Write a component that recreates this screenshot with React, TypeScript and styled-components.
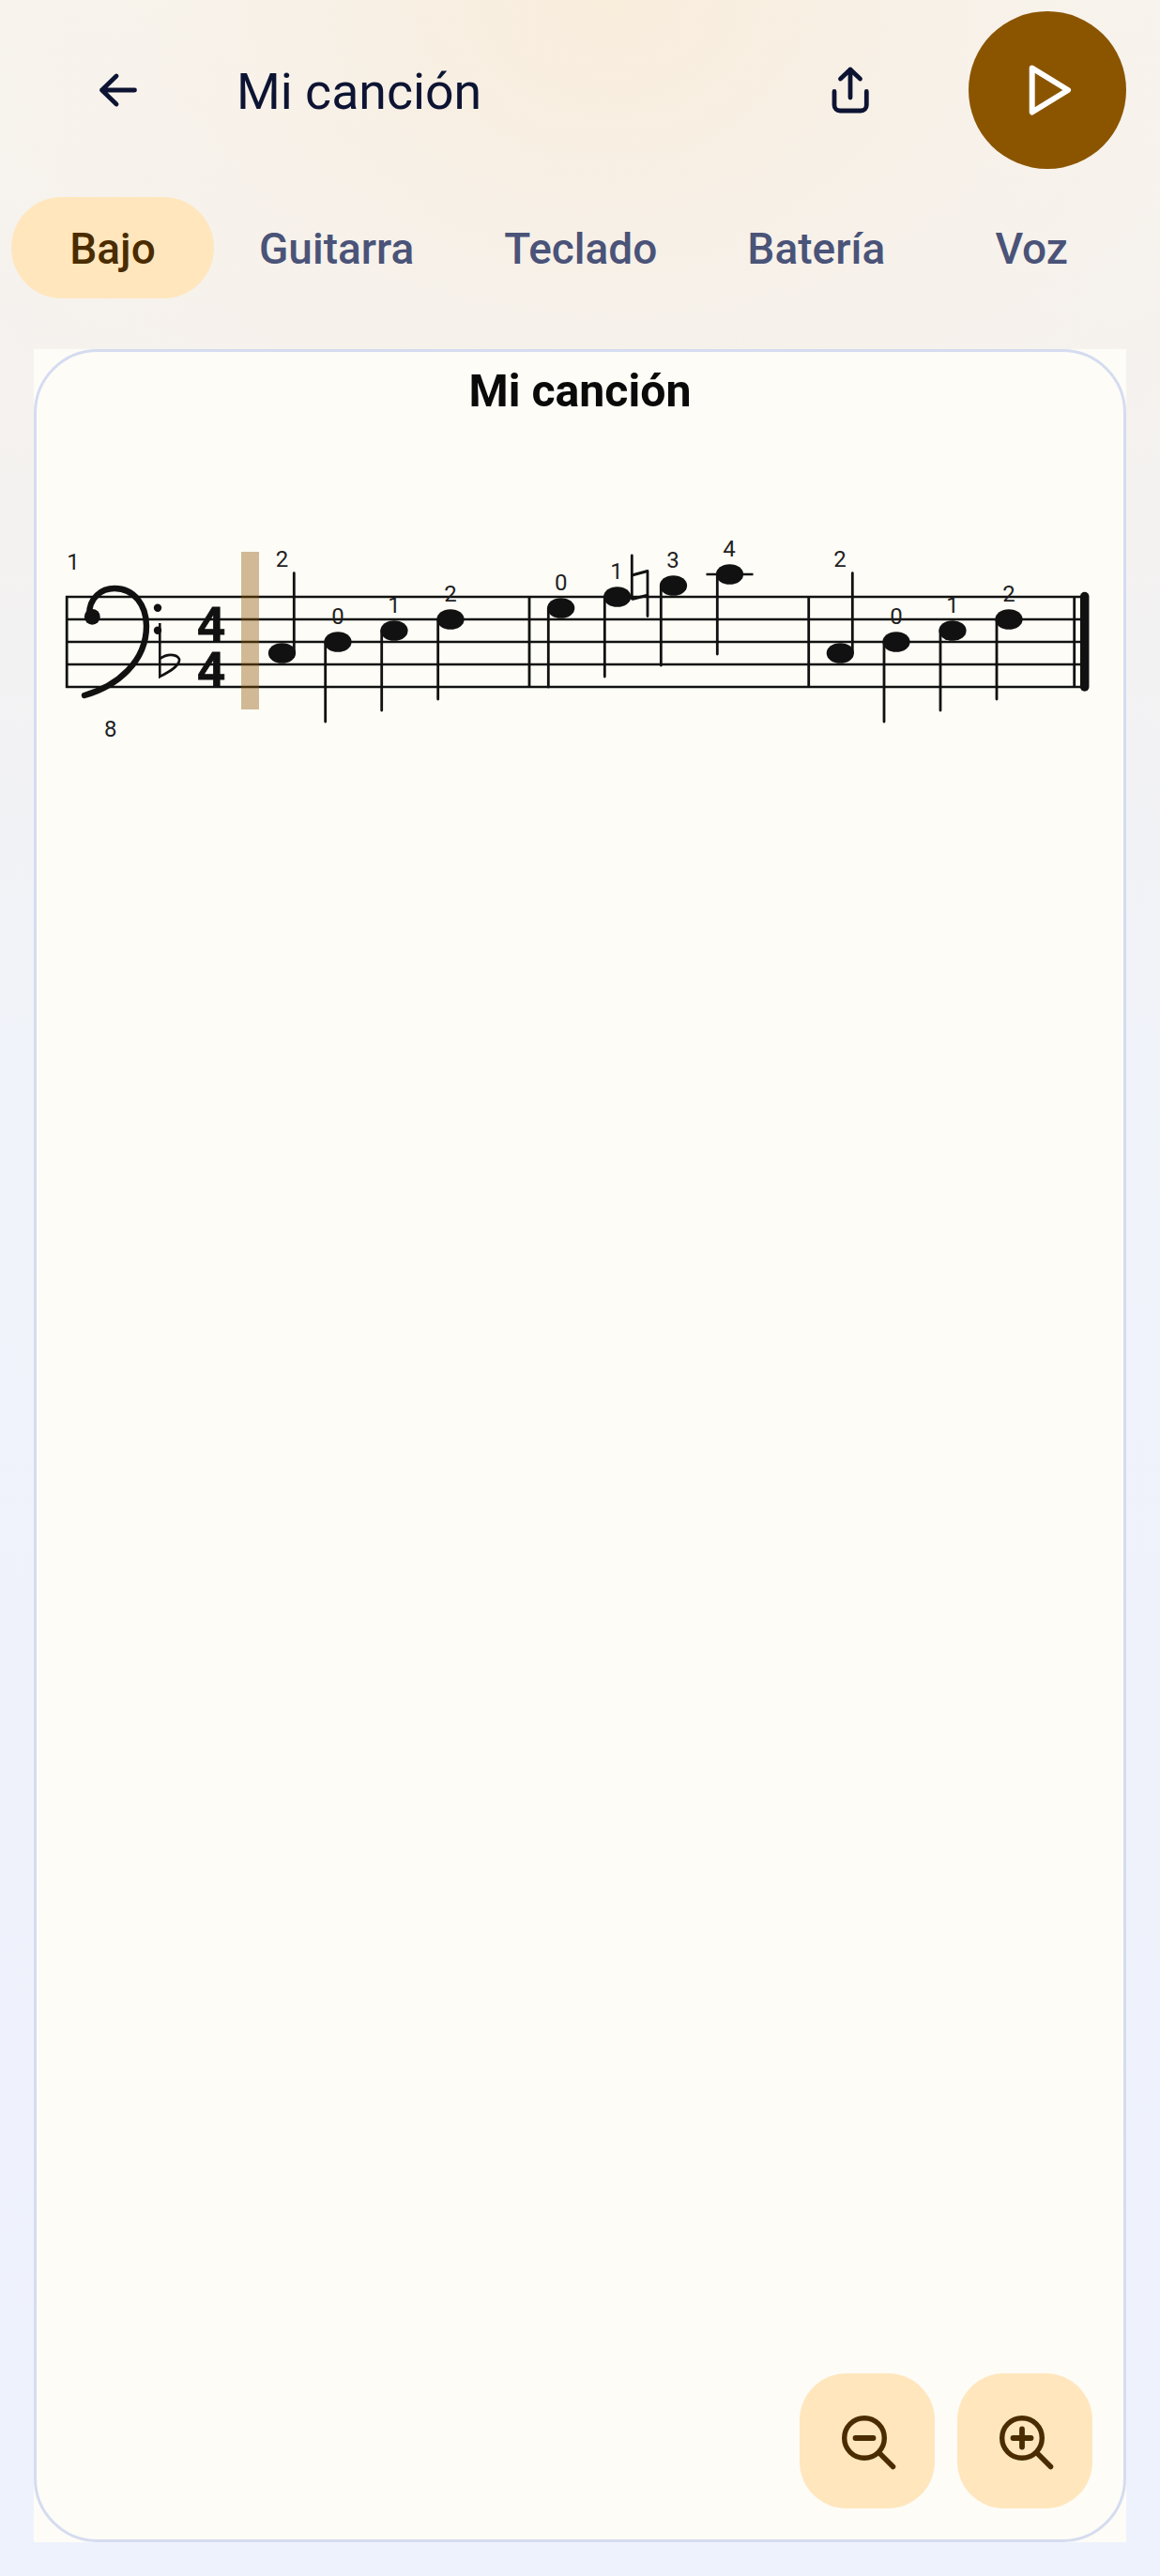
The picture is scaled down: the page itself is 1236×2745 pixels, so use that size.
import React from "react";
import styled, { createGlobalStyle } from "styled-components";

const GlobalStyle = createGlobalStyle`
  html, body {
    margin: 0;
    padding: 0;
  }
  body {
    font-family: Roboto, "Liberation Sans", sans-serif;
    background: #eef2fd;
  }
`;

const Page = styled.div`
  width: 1236px;
  height: 2745px;
  box-sizing: border-box;
  overflow: hidden;
  padding-top: 12px;
  background:
    radial-gradient(ellipse 800px 640px at 650px 0px, rgba(250, 232, 208, 0.62), rgba(250, 236, 218, 0.26) 50%, rgba(250, 236, 218, 0)),
    linear-gradient(180deg, #f7f4ef 0%, #f5f2ef 16%, #f0f3fa 42%, #eef2fd 100%);
`;

const Header = styled.header`
  display: flex;
  align-items: center;
  height: 168px;
  padding: 0 36px 0 95px;
`;

const IconBox = styled.div`
  width: 60px;
  height: 60px;
  display: flex;
  align-items: center;
  justify-content: center;
`;

const Title = styled.h1`
  flex: 1;
  margin: 3px 0 0 97px;
  font-size: 53.6px;
  font-weight: 400;
  color: #0d1433;
`;

const PlayButton = styled.div`
  width: 168px;
  height: 168px;
  margin-left: 96px;
  border-radius: 50%;
  background: #8b5500;
  display: flex;
  align-items: center;
  justify-content: center;
`;

const Tabs = styled.nav`
  display: flex;
  margin-top: 30px;
  padding-left: 12px;
`;

const Tab = styled.div<{ $active?: boolean }>`
  min-width: 216px;
  height: 108px;
  box-sizing: border-box;
  padding: 2px 48px 0;
  border-radius: 54px;
  display: flex;
  align-items: center;
  justify-content: center;
  font-size: 46px;
  font-weight: 500;
  color: ${(p) => (p.$active ? "#4a2c00" : "#4a5378")};
  background: ${(p) => (p.$active ? "#ffe6bd" : "transparent")};
`;

const ScoreBackdrop = styled.section`
  position: relative;
  margin: 54px 36px 0;
  height: 2337px;
  background: #fdfcf7;
`;

const ScoreFrame = styled.div`
  height: 100%;
  box-sizing: border-box;
  border: 3px solid #d5dcf0;
  border-radius: 68px;
`;

const ScoreTitle = styled.div`
  text-align: center;
  font-size: 48.2px;
  font-weight: 700;
  line-height: 54px;
  color: #0a0a0a;
  padding-top: 15px;
`;

const Sheet = styled.svg`
  display: block;
  margin: 96px 0 0 -3px;
`;

const ZoomControls = styled.div`
  position: absolute;
  right: 36px;
  bottom: 36px;
  display: flex;
  gap: 24px;
`;

const ZoomButton = styled.div`
  width: 144px;
  height: 144px;
  border-radius: 50px;
  background: #ffe6bd;
  display: flex;
  align-items: center;
  justify-content: center;
`;

const Fingering = styled.text`
  font-family: Roboto, sans-serif;
  font-size: 24px;
  fill: #1f1f1f;
  text-anchor: middle;
`;

const TimeDigit = styled.text`
  font-family: "Liberation Sans", sans-serif;
  font-weight: 700;
  font-size: 51px;
  fill: #111111;
  stroke: #111111;
  stroke-width: 0.8px;
  text-anchor: middle;
`;

const INK = "#111111";
const STAFF_LINES = [636, 660, 684, 708, 732];

const NOTES = [
  { x: 300.5, y: 696, stem: 313.3, end: 610.7, label: "2", lx: 300.5, ly: 604 },
  { x: 360, y: 684, stem: 346.7, end: 769, label: "0", lx: 360, ly: 665 },
  { x: 420, y: 672, stem: 406.7, end: 757, label: "1", lx: 420, ly: 653 },
  { x: 480, y: 660, stem: 466.7, end: 745, label: "2", lx: 480, ly: 641 },
  { x: 597.7, y: 648, stem: 584.3, end: 732, label: "0", lx: 597.7, ly: 629 },
  { x: 657.7, y: 636, stem: 644.3, end: 721, label: "1", lx: 657, ly: 617 },
  { x: 717.5, y: 624, stem: 704.3, end: 709, label: "3", lx: 717, ly: 605 },
  { x: 777.5, y: 612, stem: 764.3, end: 697, label: "4", lx: 777, ly: 593 },
  { x: 895.3, y: 696, stem: 908.3, end: 610.7, label: "2", lx: 895, ly: 604 },
  { x: 955, y: 684, stem: 942, end: 769, label: "0", lx: 955, ly: 665 },
  { x: 1015, y: 672, stem: 1002, end: 757, label: "1", lx: 1015, ly: 653 },
  { x: 1075, y: 660, stem: 1062, end: 745, label: "2", lx: 1075, ly: 641 },
];

const BARS = [71.2, 564, 861.7, 1144.7];

const Score = () => (
  <Sheet width={1164} height={260} viewBox="36 540 1164 260">
    {STAFF_LINES.map((y) => (
      <line key={y} x1={70} x2={1156} y1={y} y2={y} stroke={INK} strokeWidth={2.6} />
    ))}
    {BARS.map((x) => (
      <line key={x} x1={x} x2={x} y1={635} y2={733} stroke={INK} strokeWidth={2.8} />
    ))}
    <line x1={1155.7} x2={1155.7} y1={635.5} y2={732} stroke={INK} strokeWidth={9.5} strokeLinecap="round" />

    {/* bass clef */}
    <path
      d="M95 655 C95 637 108 627 122 627 C143 627 156 645 156 667 C156 705 125 731 90 741"
      fill="none"
      stroke={INK}
      strokeWidth={6.4}
      strokeLinecap="round"
    />
    <circle cx={98.3} cy={657.3} r={8.4} fill={INK} />
    <circle cx={168} cy={647.7} r={4.2} fill={INK} />
    <circle cx={168} cy={671.7} r={4.2} fill={INK} />

    {/* flat */}
    <path
      d="M170.3 664 V721 C178 717 190 711 191 704 C192 698 180 695 170.3 702"
      fill="none"
      stroke={INK}
      strokeWidth={2.6}
    />

    <TimeDigit x={225} y={683}>4</TimeDigit>
    <TimeDigit x={225} y={731}>4</TimeDigit>

    <rect x={257} y={588} width={19} height={168} fill="#8b5500" fillOpacity={0.4} />

    {NOTES.map((n) => (
      <g key={n.x}>
        <line x1={n.stem} x2={n.stem} y1={n.y} y2={n.end} stroke={INK} strokeWidth={2.8} strokeLinecap="round" />
        <ellipse cx={n.x} cy={n.y} rx={14.6} ry={10.8} fill={INK} />
        <Fingering x={n.lx} y={n.ly}>{n.label}</Fingering>
      </g>
    ))}

    {/* natural */}
    <path d="M673.3 592 V638 M690 608.5 V656.5" stroke={INK} strokeWidth={2.8} strokeLinecap="round" fill="none" />
    <path d="M673.3 613 L690 608.5 M673.3 638.5 L690 634.3" stroke={INK} strokeWidth={3.2} fill="none" />

    <line x1={752.5} x2={802.5} y1={612} y2={612} stroke={INK} strokeWidth={2.6} />

    <Fingering x={78} y={606.7}>1</Fingering>
    <Fingering x={117.7} y={785}>8</Fingering>
  </Sheet>
);

const ZoomIcon = ({ plus }: { plus?: boolean }) => (
  <svg width={72} height={72} viewBox="0 0 72 72" fill="none" stroke="#4a2c00" strokeLinecap="round">
    <circle cx={33} cy={33} r={21.3} strokeWidth={5.4} />
    <path d="M49 49 L63.5 63.5" strokeWidth={5.6} />
    <path d="M23.5 33 H42.5" strokeWidth={5.8} />
    {plus && <path d="M33 23.5 V42.5" strokeWidth={5.8} />}
  </svg>
);

export default function App() {
  return (
    <Page>
      <GlobalStyle />
      <Header>
        <IconBox>
          <svg width={60} height={60} viewBox="0 0 60 60" fill="none" stroke="#0d1433" strokeWidth={4.8} strokeLinecap="round" strokeLinejoin="round">
            <path d="M29 15 L13.5 30 L29 45 M13.5 30 H48.5" />
          </svg>
        </IconBox>
        <Title>Mi canción</Title>
        <IconBox>
          <svg width={60} height={60} viewBox="0 0 60 60" fill="none" stroke="#0d1433" strokeWidth={4.8} strokeLinecap="round" strokeLinejoin="round">
            <path d="M30 38 V8 M19.5 18 L30 8 L40.5 18" />
            <path d="M13 31.5 V46 A6 6 0 0 0 19 52 H41.3 A6 6 0 0 0 47.3 46 V31.5" />
          </svg>
        </IconBox>
        <PlayButton>
          <svg width={60} height={60} viewBox="0 0 60 60" fill="none" stroke="#fff" strokeWidth={6} strokeLinejoin="round">
            <path d="M13.7 6.5 L52 30 L13.7 53.5 Z" />
          </svg>
        </PlayButton>
      </Header>
      <Tabs>
        <Tab $active>Bajo</Tab>
        <Tab>Guitarra</Tab>
        <Tab>Teclado</Tab>
        <Tab>Batería</Tab>
        <Tab>Voz</Tab>
      </Tabs>
      <ScoreBackdrop>
        <ScoreFrame>
          <ScoreTitle>Mi canción</ScoreTitle>
          <Score />
        </ScoreFrame>
        <ZoomControls>
          <ZoomButton>
            <ZoomIcon />
          </ZoomButton>
          <ZoomButton>
            <ZoomIcon plus />
          </ZoomButton>
        </ZoomControls>
      </ScoreBackdrop>
    </Page>
  );
}
